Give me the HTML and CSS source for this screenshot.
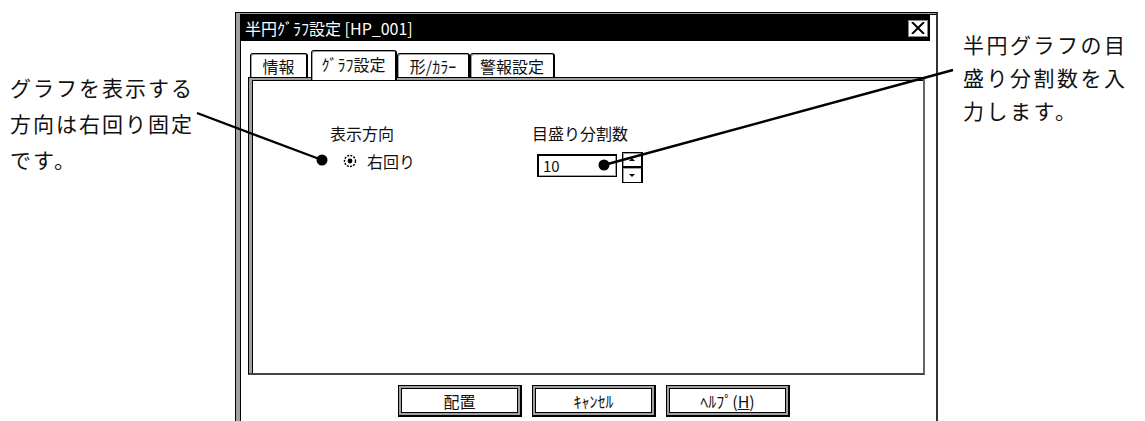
FILE: index.html
```html
<!DOCTYPE html>
<html lang="ja">
<head>
    <meta charset="utf-8">
    <title>半円グラフ設定</title>
    <link rel="stylesheet" href="styles.css">
</head>
<body>
<div class="page">
    <p class="note note-left">グラフを表示する<br>方向は右回り固定<br>です。</p>

    <div class="window">
        <div class="titlebar">
            <span class="title">半円ｸﾞﾗﾌ設定 [HP_001]</span>
            <span class="close">
                <svg width="14" height="12" viewBox="0 0 14 12">
                    <path d="M1 0 L13 12 M13 0 L1 12" stroke="#000" stroke-width="2" fill="none"/>
                </svg>
            </span>
        </div>

        <div class="tabs">
            <span class="tab tab-info">情報</span>
            <span class="tab tab-graph active">ｸﾞﾗﾌ設定</span>
            <span class="tab tab-shape">形/ｶﾗｰ</span>
            <span class="tab tab-alarm">警報設定</span>
        </div>

        <div class="panel">
            <div class="field field-dir">
                <div class="label">表示方向</div>
                <div class="radio-row">
                    <svg class="radio" width="14" height="14" viewBox="0 0 14 14">
                        <circle cx="7" cy="7" r="5.5" fill="none" stroke="#000" stroke-width="1.4" stroke-dasharray="2 1.2"/>
                        <circle cx="7" cy="7" r="2.4" fill="#000"/>
                    </svg>
                    <span>右回り</span>
                </div>
            </div>
            <div class="field field-div">
                <div class="label">目盛り分割数</div>
                <div class="spin">
                    <div class="spin-input">10</div>
                    <div class="spin-btns">
                        <span class="spin-btn spin-up"><i class="arrow arrow-up"></i></span>
                        <span class="spin-btn spin-down"><i class="arrow"></i></span>
                    </div>
                </div>
            </div>
        </div>

        <div class="buttons">
            <button class="btn">配置</button>
            <button class="btn">ｷｬﾝｾﾙ</button>
            <button class="btn">ﾍﾙﾌﾟ(<u>H</u>)</button>
        </div>
    </div>

    <p class="note note-right">半円グラフの目<br>盛り分割数を入<br>力します。</p>

    <!-- callout lines -->
    <svg class="callouts" width="1145" height="421" viewBox="0 0 1145 421">
        <line x1="197" y1="113" x2="322" y2="160" stroke="#000" stroke-width="2.4"/>
        <circle cx="322" cy="160" r="5.5" fill="#000"/>
        <line x1="604" y1="165" x2="953" y2="70" stroke="#000" stroke-width="2.4"/>
        <circle cx="604" cy="165" r="5.5" fill="#000"/>
    </svg>
</div>
</body>
</html>
```

FILE: styles.css
```css
* {
    box-sizing: border-box;
}

body {
    margin: 0;
    background-color: #fff;
    font-family: "Noto Sans CJK JP", "Noto Sans", sans-serif;
    color: #111;
}

.page {
    position: relative;
    display: flex;
    align-items: flex-start;
    width: 1145px;
    height: 421px;
    overflow: hidden;
}

/* annotations */
.note {
    flex: none;
    margin: 0;
    font-size: 21px;
    letter-spacing: 2px;
    white-space: nowrap;
    color: #111;
}

.note-left {
    width: 235px;
    padding-left: 10px;
    margin-top: 69px;
    line-height: 36px;
}

.note-right {
    margin-left: 25px;
    margin-top: 28px;
    line-height: 33px;
    letter-spacing: 2.5px;
}

.callouts {
    position: absolute;
    top: 0;
    left: 0;
    pointer-events: none;
}

/* dialog window */
.window {
    flex: none;
    width: 703px;
    height: 430px;
    margin-top: 12px;
    padding: 2px 0 0 5px;
    border: 1px solid #000;
    border-right: 2px solid #333;
    border-bottom: none;
    box-shadow: inset 4px 1px 0 #a0a0a0, inset 5px 2px 0 #000;
    font-size: 16px;
}

.titlebar {
    display: flex;
    align-items: center;
    justify-content: space-between;
    height: 26px;
    margin-right: 6px;
    padding: 0 2px 0 4px;
    background-color: #000;
    color: #fff;
}

.title {
    line-height: 26px;
}

.close {
    display: flex;
    align-items: center;
    justify-content: center;
    width: 20px;
    height: 17px;
    background-color: #fff;
    border: 1px solid #888;
}

/* tabs */
.tabs {
    position: relative;
    z-index: 1;
    display: flex;
    align-items: flex-end;
    height: 27px;
    margin: 9px 0 0 9px;
}

.tab {
    display: flex;
    align-items: center;
    justify-content: center;
    height: 24px;
    background-color: #fff;
    border: 1px solid #000;
    border-right-width: 2px;
    border-bottom: none;
    border-radius: 3px 3px 0 0;
    box-shadow: inset 1px 1px 0 #a0a0a0;
    line-height: 1;
}

.tab.active {
    height: 30px;
    margin-bottom: -3px;
    padding-bottom: 3px;
}

.tab-info {
    width: 58px;
    margin-right: 3px;
}

.tab-graph {
    width: 86px;
}

.tab-shape {
    width: 73px;
}

.tab-alarm {
    width: 85px;
}

/* panel */
.panel {
    display: flex;
    width: 677px;
    height: 298px;
    margin-left: 7px;
    padding: 45px 0 0 81px;
    border: 1px solid #000;
    border-right: 2px solid #666;
    border-bottom: 2px solid #444;
    box-shadow: inset 3px 2px 0 #a0a0a0, inset 4px 3px 0 #000;
}

.label {
    line-height: 20px;
}

.field-dir {
    width: 202px;
}

.radio-row {
    display: flex;
    align-items: center;
    gap: 10px;
    height: 16px;
    margin-top: 10px;
    padding-left: 13px;
    line-height: 16px;
}

.spin {
    display: flex;
    align-items: flex-start;
    margin: 11px 0 0 5px;
}

.spin-input {
    width: 80px;
    height: 23px;
    padding-left: 5px;
    border: 1px solid #000;
    box-shadow: inset 1px 1px 0 #000, inset -1px -1px 0 #a0a0a0;
    font-size: 15px;
    line-height: 21px;
}

.spin-btns {
    display: flex;
    flex-direction: column;
    margin: -2px 0 0 5px;
}

.spin-btn {
    display: flex;
    align-items: center;
    justify-content: center;
    width: 21px;
    border: 1px solid #000;
    border-right-width: 2px;
    box-shadow: inset 1px 1px 0 #a0a0a0;
}

.spin-up {
    height: 15px;
}

.spin-down {
    height: 16px;
}

.arrow {
    width: 0;
    height: 0;
    border-left: 3px solid transparent;
    border-right: 3px solid transparent;
    border-top: 3px solid #000;
}

.arrow-up {
    border-top: none;
    border-bottom: 3px solid #000;
}

/* bottom buttons */
.buttons {
    display: flex;
    gap: 10px;
    margin-top: 10px;
    padding-left: 157px;
}

.btn {
    width: 124px;
    height: 32px;
    padding: 0;
    background-color: #fff;
    border: 1px solid #000;
    border-right-width: 2px;
    border-bottom-width: 2px;
    box-shadow: inset 0 0 0 2px #a0a0a0, inset 0 0 0 3px #000;
    font-family: inherit;
    font-size: 16px;
    color: #111;
}
```
